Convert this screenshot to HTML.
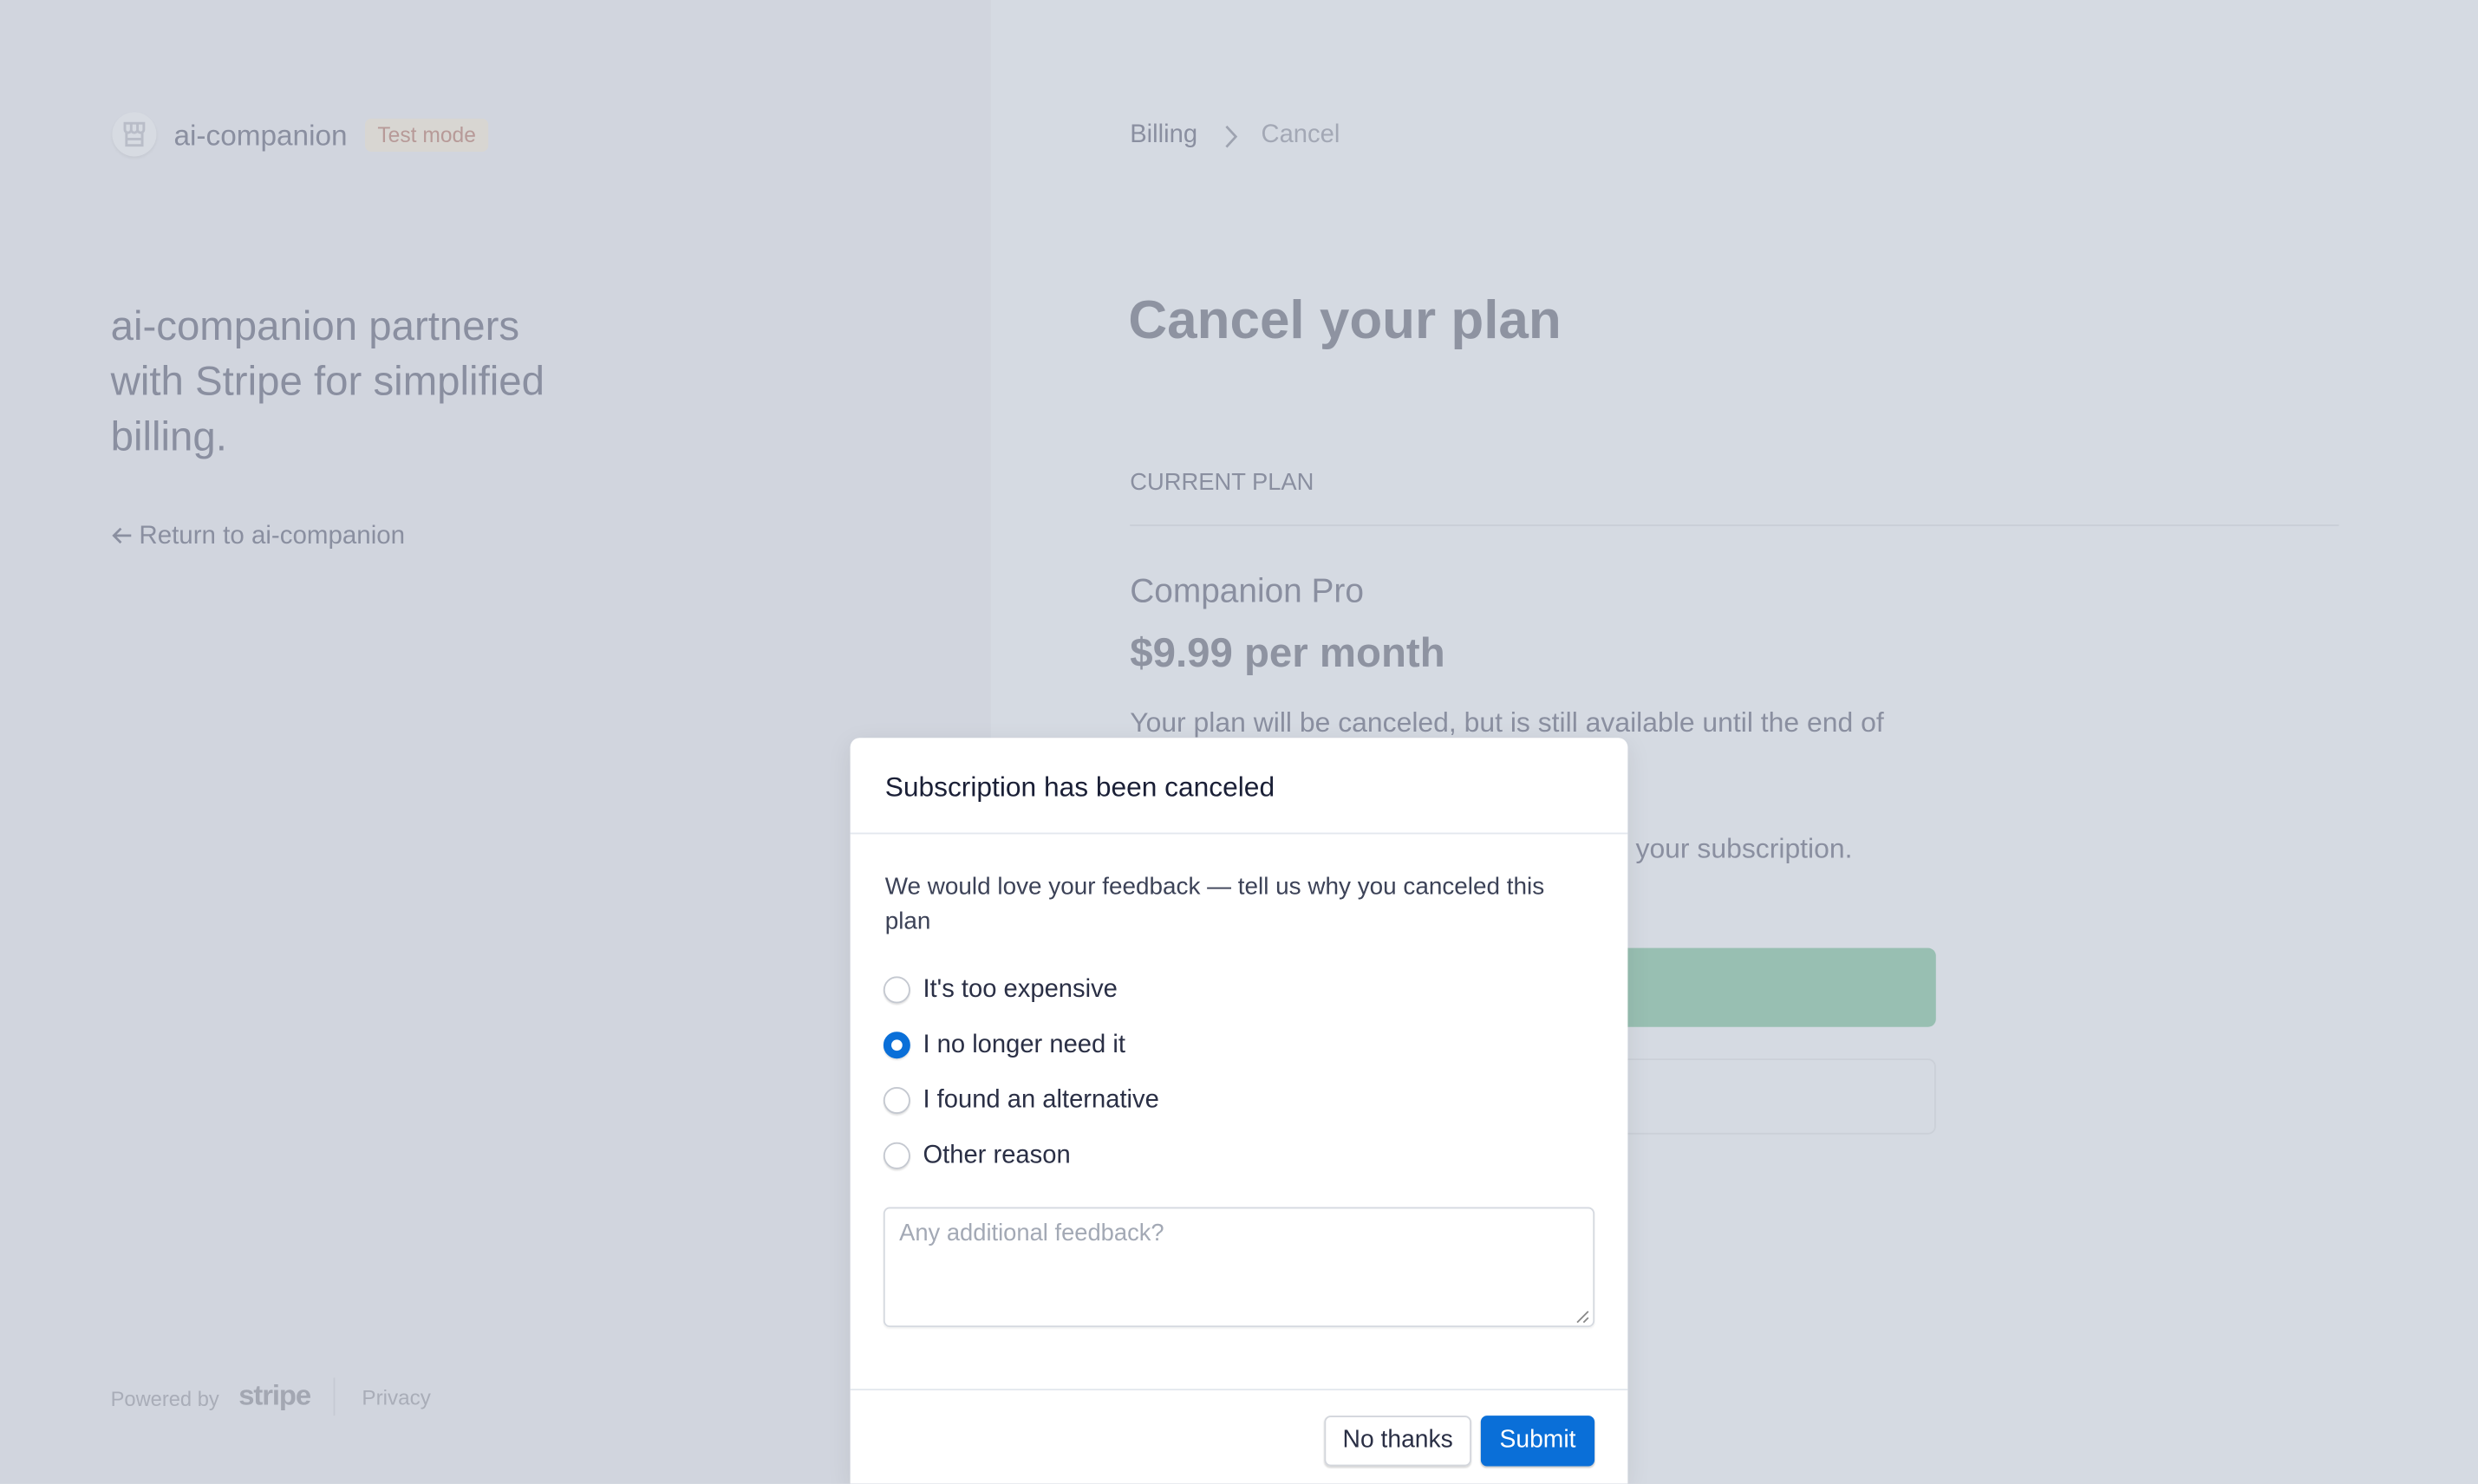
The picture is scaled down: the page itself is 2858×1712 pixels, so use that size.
<!DOCTYPE html>
<html><head><meta charset="utf-8"><style>
*{box-sizing:border-box;margin:0;padding:0}
html,body{width:2858px;height:1712px;overflow:hidden;background:#d5dae2}
body{font-family:"Liberation Sans",sans-serif}
#s{position:absolute;left:0;top:0;width:1568px;height:939px;transform:scale(1.8227);transform-origin:0 0;background:#d5dae2;overflow:hidden}
.a{position:absolute;white-space:nowrap}
.g{color:#8a8fa0}
.radio{position:absolute;left:559px;width:17px;height:17px;border-radius:50%;border:1px solid #c4c8d0;background:#fff;box-shadow:0 1px 1px rgba(0,0,0,.12)}
.lbl{position:absolute;left:584px;font-size:16px;color:#2a2f45;white-space:nowrap}
</style></head><body><div id="s">
<div class="a" style="left:0;top:0;width:627px;height:939px;background:#d1d5de"></div>
<div class="a" style="left:71px;top:71px;width:28px;height:28px;border-radius:50%;background:#d7dbe2;box-shadow:0 1px 2px rgba(0,0,0,.06)"></div>
<svg class="a" style="left:77px;top:76px" width="16" height="18" viewBox="0 0 16 18" fill="none" stroke="#b9bdc8" stroke-width="1.6"><path d="M2 2h12v4a2 2 0 0 1-4 0 2 2 0 0 1-4 0 2 2 0 0 1-4 0z M6 2v4 M10 2v4"/><path d="M3 8v8h10V8 M3 12h10"/></svg>
<div class="a g" style="left:110px;top:75px;font-size:18.3px">ai-companion</div>
<div class="a" style="left:231px;top:75px;width:78px;height:21px;border-radius:4px;background:#d8d6d2;color:#b79a98;font-size:13.5px;line-height:21px;text-align:center">Test mode</div>
<div class="a g" style="left:70px;top:189px;font-size:26px;line-height:35px;white-space:normal;width:300px">ai-companion partners with Stripe for simplified billing.</div>
<svg class="a" style="left:70px;top:333px" width="14" height="12" viewBox="0 0 14 12"><path d="M13 6H2M6.5 1.5L2 6l4.5 4.5" stroke="#8a8fa0" stroke-width="1.5" fill="none"/></svg>
<div class="a g" style="left:88px;top:330px;font-size:16.2px">Return to ai-companion</div>
<div class="a" style="left:70px;top:878px;font-size:13px;color:#a9adb8">Powered by</div>
<div class="a" style="left:151px;top:873px;font-size:18px;font-weight:bold;color:#a3a7b2;letter-spacing:-.6px">stripe</div>
<div class="a" style="left:211px;top:872px;width:1px;height:24px;background:#c6cad3"></div>
<div class="a" style="left:229px;top:877px;font-size:13.3px;color:#a9adb8">Privacy</div>

<div class="a g" style="left:715px;top:77px;font-size:16px">Billing</div>
<svg class="a" style="left:774px;top:79px" width="10" height="15" viewBox="0 0 10 15"><path d="M2 1l6 6.5L2 14" stroke="#9ea3b0" stroke-width="1.5" fill="none"/></svg>
<div class="a" style="left:798px;top:77px;font-size:16px;color:#a3a8b5">Cancel</div>
<div class="a" style="left:714px;top:184px;font-size:34px;font-weight:bold;color:#8e93a1">Cancel your plan</div>
<div class="a g" style="left:715px;top:297px;font-size:15px">CURRENT PLAN</div>
<div class="a" style="left:715px;top:332px;width:765px;height:1px;background:#c9ced7"></div>
<div class="a g" style="left:715px;top:362px;font-size:21.3px">Companion Pro</div>
<div class="a" style="left:715px;top:398px;font-size:26px;font-weight:bold;color:#8e93a1">$9.99 per month</div>
<div class="a g" style="left:715px;top:447px;font-size:17.5px">Your plan will be canceled, but is still available until the end of</div>
<div class="a g" style="left:1035px;top:527px;font-size:17.5px">your subscription.</div>
<div class="a" style="left:715px;top:600px;width:510px;height:50px;border-radius:5px;background:#98bfb2"></div>
<div class="a" style="left:715px;top:670px;width:510px;height:48px;border-radius:5px;border:1px solid #cbd0d8"></div>

<div class="a" style="left:538px;top:467px;width:492px;height:472px;background:#fff;border-radius:6px 6px 0 0;box-shadow:0 4px 16px rgba(0,0,0,.08)"></div>
<div class="a" style="left:560px;top:488px;font-size:17.4px;color:#1a1f36">Subscription has been canceled</div>
<div class="a" style="left:538px;top:527px;width:492px;height:1px;background:#e3e8ee"></div>
<div class="a" style="left:560px;top:551px;width:440px;font-size:15.3px;line-height:22px;color:#3c4257;white-space:normal">We would love your feedback — tell us why you canceled this plan</div>
<div class="radio" style="top:618px"></div>
<div class="radio" style="top:653px;background:#0a6fd8;border:5px solid #0a6fd8"><div style="width:7px;height:7px;border-radius:50%;background:#fff"></div></div>
<div class="radio" style="top:688px"></div>
<div class="radio" style="top:723px"></div>
<div class="lbl" style="top:618px">It's too expensive</div>
<div class="lbl" style="top:653px">I no longer need it</div>
<div class="lbl" style="top:688px">I found an alternative</div>
<div class="lbl" style="top:723px">Other reason</div>
<div class="a" style="left:559px;top:764px;width:450px;height:76px;border:1px solid #d5d9e0;border-radius:4px;box-shadow:0 1px 1px rgba(0,0,0,.05)"></div>
<div class="a" style="left:569px;top:772px;font-size:15px;color:#a3a9b5">Any additional feedback?</div>
<svg class="a" style="left:997px;top:829px" width="9" height="9"><path d="M1 8L8 1M5 8L8 5" stroke="#888" stroke-width="1"/></svg>
<div class="a" style="left:538px;top:879px;width:492px;height:1px;background:#e3e8ee"></div>
<div class="a" style="left:838px;top:896px;width:93px;height:32px;border:1px solid #d3d6dc;border-radius:4px;box-shadow:0 1px 1px rgba(0,0,0,.15);font-size:15.5px;color:#2a2f45;text-align:center;line-height:30px">No thanks</div>
<div class="a" style="left:937px;top:896px;width:72px;height:32px;border-radius:4px;background:#0a6fd8;box-shadow:0 1px 1px rgba(0,0,0,.2);font-size:15.5px;color:#fff;text-align:center;line-height:32px">Submit</div>
</div></body></html>
